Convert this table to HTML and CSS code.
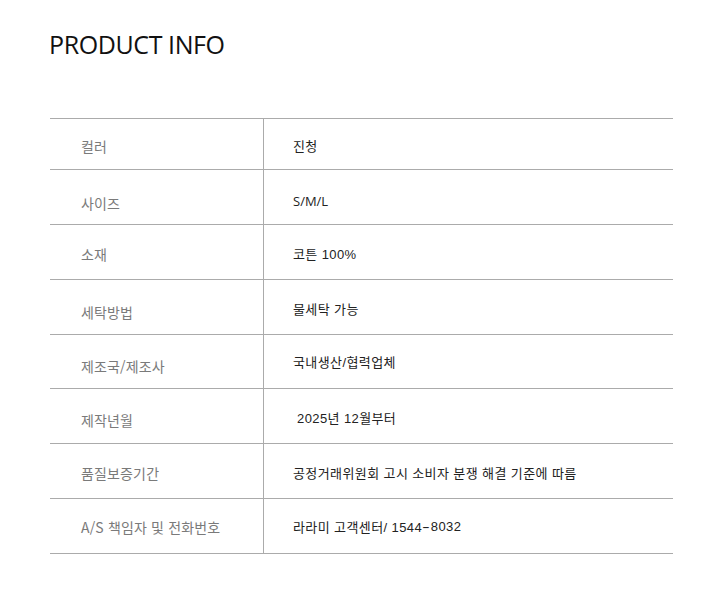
FILE: index.html
```html
<!DOCTYPE html>
<html lang="ko">
<head>
<meta charset="utf-8">
<title>Product Info</title>
<link rel="stylesheet" href="styles.css">
</head>
<body>
<div class="page">
  <h1 class="title">PRODUCT INFO</h1>
  <div class="info">
    <div class="row"><div class="label">컬러</div><div class="value">진청</div></div>
    <div class="row r2"><div class="label">사이즈</div><div class="value latin">S/M/L</div></div>
    <div class="row r3"><div class="label">소재</div><div class="value">코튼 100%</div></div>
    <div class="row r4"><div class="label">세탁방법</div><div class="value">물세탁 가능</div></div>
    <div class="row r5"><div class="label">제조국/제조사</div><div class="value">국내생산/협력업체</div></div>
    <div class="row r6"><div class="label">제작년월</div><div class="value indent">2025년 12월부터</div></div>
    <div class="row r7"><div class="label">품질보증기간</div><div class="value">공정거래위원회 고시 소비자 분쟁 해결 기준에 따름</div></div>
    <div class="row r8"><div class="label">A/S 책임자 및 전화번호</div><div class="value">라라미 고객센터/ 1544<span class="dash">-</span>8032</div></div>
  </div>
</div>
</body>
</html>
```

FILE: styles.css
```css
html, body {
  margin: 0;
  padding: 0;
  background: #fff;
}
.page {
  padding: 24px 53px 0 50px;
}
.title {
  margin: 0 0 0 -1px;
  font-family: "Open Sans", "Liberation Sans", sans-serif;
  font-weight: 400;
  font-size: 25px;
  line-height: 40px;
  color: #111;
  letter-spacing: -0.4px;
}
.info {
  margin-top: 54px;
  border-top: 1px solid #ababab;
}
.row {
  display: grid;
  grid-template-columns: 214px 1fr;
  height: 54px;
  border-bottom: 1px solid #ababab;
}
.row:first-child { height: 50px; }
.row.r5 { height: 53px; }
.label {
  display: flex;
  align-items: center;
  padding: 4px 0 0 31px;
  border-right: 1px solid #ababab;
  font-family: "Noto Sans CJK KR", "Noto Sans", sans-serif;
  font-size: 14px;
  letter-spacing: 0.15px;
  color: #7a7a7a;
}
.value {
  display: flex;
  align-items: center;
  padding: 2px 0 0 29px;
  font-family: "Liberation Sans", "Noto Sans CJK KR", sans-serif;
  font-size: 13px;
  letter-spacing: 0.4px;
  color: #222;
  white-space: pre;
}
.value.latin {
  font-family: "Open Sans", "Noto Sans CJK KR", sans-serif;
  letter-spacing: 0;
}
.dash {
  display: inline-block;
  padding: 0 2px;
  transform: scaleX(1.8);
}
.value.indent { padding-left: 33px; }
.r2 .label { padding-top: 12px; }
.r2 .value { padding-top: 7px; }
.r4 .label { padding-top: 10px; }
.r5 .label { padding-top: 8px; }
.r5 .value { padding-top: 0; }
.r6 .label { padding-top: 7px; }
.r8 .label { padding-top: 1px; }
.r8 .value { padding-top: 0; }
```
